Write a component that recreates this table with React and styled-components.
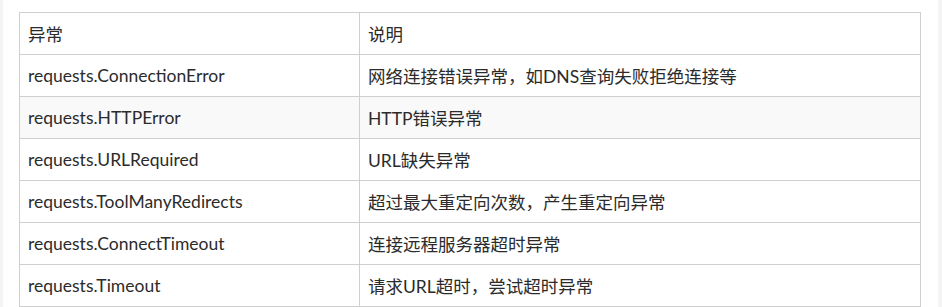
import React from 'react';
import styled, { createGlobalStyle } from 'styled-components';

const GlobalStyle = createGlobalStyle`
  body {
    margin: 0;
    background: #f4f4f4;
    font-family: Lato, "Noto Sans CJK SC", sans-serif;
  }
`;

const Page = styled.div`
  margin: 0 4px 0 3px;
  background: #fff;
  padding: 12px 17px 1px 16px;
  height: 307px;
  box-sizing: border-box;
`;

const Table = styled.table`
  width: 902px;
  border-collapse: collapse;
  table-layout: fixed;
`;

const Cell = styled.td`
  height: 41px;
  padding: 0 8px;
  border: 1px solid #cfcfcf;
  font-size: 17.5px;
  color: #2b2b2b;
  vertical-align: middle;
  white-space: nowrap;
`;

const Row = styled.tr`
  background: ${p => (p.$striped ? '#f9f9f9' : '#fff')};
`;

const rows = [
  ['异常', '说明'],
  ['requests.ConnectionError', '网络连接错误异常，如DNS查询失败拒绝连接等'],
  ['requests.HTTPError', 'HTTP错误异常'],
  ['requests.URLRequired', 'URL缺失异常'],
  ['requests.ToolManyRedirects', '超过最大重定向次数，产生重定向异常'],
  ['requests.ConnectTimeout', '连接远程服务器超时异常'],
  ['requests.Timeout', '请求URL超时，尝试超时异常']
];

export default function App() {
  return (
    <Page>
      <GlobalStyle />
      <Table>
        <colgroup>
          <col style={{ width: 340 }} />
          <col />
        </colgroup>
        <tbody>
          {rows.map((r, i) => (
            <Row key={i} $striped={i === 2}>
              <Cell>{r[0]}</Cell>
              <Cell>{r[1]}</Cell>
            </Row>
          ))}
        </tbody>
      </Table>
    </Page>
  );
}
